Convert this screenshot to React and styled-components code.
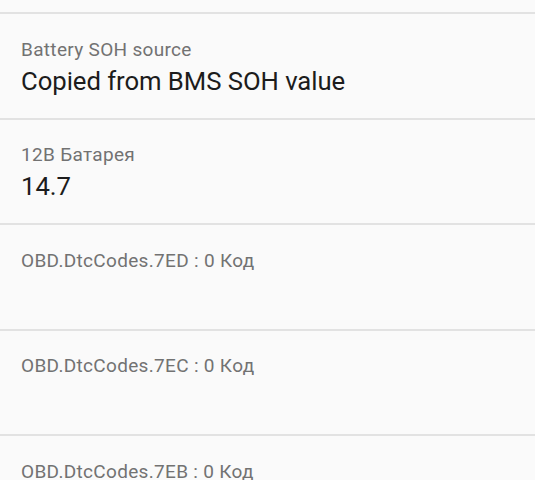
import React from "react";
import styled, { createGlobalStyle } from "styled-components";

const Global = createGlobalStyle`
  html, body { margin: 0; padding: 0; background: #fafafa; }
  body { font-family: Roboto, "Noto Sans", Arial, sans-serif; }
`;

const Screen = styled.div`
  width: 535px;
  height: 480px;
  overflow: hidden;
  background: #fafafa;
`;

const List = styled.div`
  display: flex;
  flex-direction: column;
`;

const Stub = styled.div`
  height: 12px;
  border-bottom: 2px solid #e2e2e2;
`;

const Row = styled.div`
  box-sizing: border-box;
  height: 105.5px;
  padding: 23.5px 21px 0;
  border-bottom: 2px solid #e2e2e2;
  display: flex;
  flex-direction: column;
`;

const Label = styled.div`
  font-size: 19px;
  line-height: 24px;
  letter-spacing: 0.32px;
  color: #727272;
  white-space: nowrap;
`;

const Value = styled.div`
  margin-top: 3px;
  font-size: 25.7px;
  line-height: 32px;
  letter-spacing: -0.05px;
  color: #1c1c1c;
  white-space: nowrap;
`;

const items = [
  { label: "Battery SOH source", value: "Copied from BMS SOH value" },
  { label: "12B Батарея", value: "14.7" },
  { label: "OBD.DtcCodes.7ED : 0 Код" },
  { label: "OBD.DtcCodes.7EC : 0 Код" },
  { label: "OBD.DtcCodes.7EB : 0 Код" },
];

export default function App() {
  return (
    <Screen>
      <Global />
      <List>
        <Stub />
        {items.map((it) => (
          <Row key={it.label}>
            <Label>{it.label}</Label>
            {it.value && <Value>{it.value}</Value>}
          </Row>
        ))}
      </List>
    </Screen>
  );
}
